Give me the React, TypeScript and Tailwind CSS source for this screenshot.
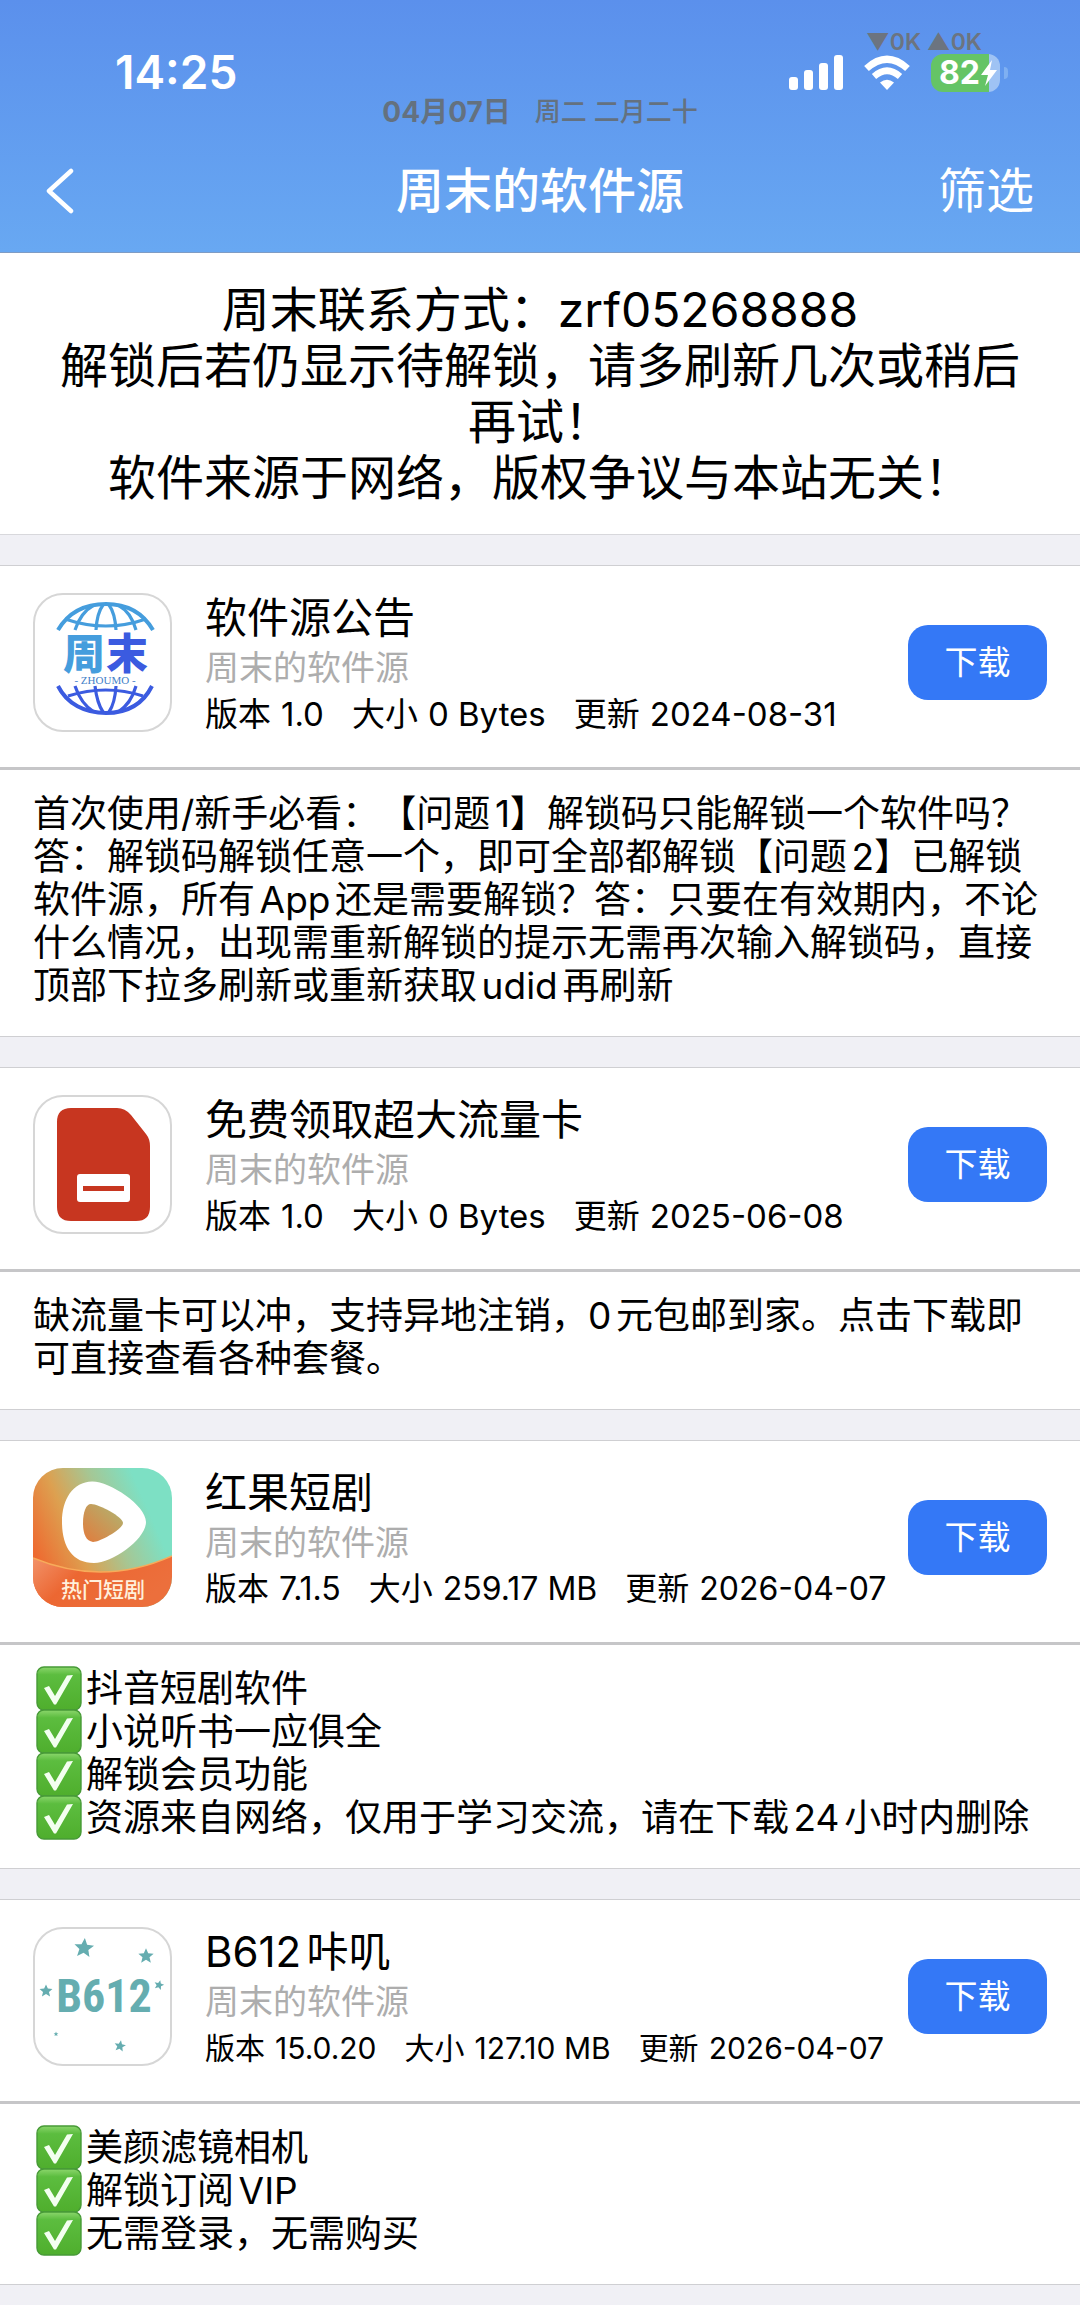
import type { ReactNode } from "react";

const FONT = "font-['Inter','Noto_Sans_CJK_SC',sans-serif]";

function NoticeIcon() {
  return (
    <svg viewBox="2 2 135 135" className="size-full" aria-hidden="true">
      <g fill="none" stroke="#459ddd" strokeWidth="3.2">
        <path d="M25 37C35 20 52 11 73 11S110 20 120 37" strokeWidth="4" />
        <path d="M32 26Q73 40 113 26" />
        <path d="M42 37Q48 19 61 12M63 37Q64 20 70 12M83 37Q82 20 76 12M103 37Q98 19 85 12" />
      </g>
      <g fill="none" stroke="#3b5be0" strokeWidth="3.2">
        <path d="M25 93C34 111 52 120 73 120S110 111 119 93" strokeWidth="4" />
        <path d="M35 103Q73 91 110 103" />
        <path d="M42 93Q48 111 61 119M62 93Q64 110 70 119M83 93Q82 110 76 119M103 93Q98 111 85 119" />
      </g>
      <g fontFamily="'Noto Sans CJK SC', sans-serif" fontWeight="900" fontSize="42">
        <text x="30" y="76" fill="#459ddd">周</text>
        <text x="73" y="76" fill="#3b5be0">末</text>
      </g>
      <text x="72" y="91" textAnchor="middle" fontFamily="'Liberation Serif', serif" fontSize="11" fill="#4380c8">
        - ZHOUMO -
      </text>
    </svg>
  );
}

function SimIcon() {
  return (
    <svg viewBox="2 2 135 135" className="size-full" aria-hidden="true">
      <path
        d="M38 13H84Q92 13 98 20L113 39Q117 44 117 51V112Q117 126 103 126H38Q24 126 24 112V27Q24 13 38 13Z"
        fill="#c73620"
      />
      <rect x="44" y="79" width="53" height="28" rx="3" fill="#fff" />
      <rect x="50" y="91" width="41" height="5" fill="#c73620" />
    </svg>
  );
}

function DramaIcon() {
  return (
    <svg viewBox="0 0 139 139" className="size-full" aria-hidden="true">
      <defs>
        <linearGradient id="dramaBase" x1="0.05" y1="0.7" x2="0.85" y2="0.35">
          <stop offset="0" stopColor="#ee6a30" />
          <stop offset="0.35" stopColor="#dda050" />
          <stop offset="0.68" stopColor="#a5c795" />
          <stop offset="1" stopColor="#7de0c4" />
        </linearGradient>
        <linearGradient id="dramaBand" x1="0" y1="0" x2="1" y2="0.4">
          <stop offset="0" stopColor="#f2936a" />
          <stop offset="0.4" stopColor="#ec6732" />
          <stop offset="1" stopColor="#ec6f3c" />
        </linearGradient>
        <linearGradient id="dramaPlay" x1="0" y1="1" x2="1" y2="0">
          <stop offset="0" stopColor="#e27b3c" />
          <stop offset="1" stopColor="#adb774" />
        </linearGradient>
      </defs>
      <rect width="139" height="139" fill="url(#dramaBase)" />
      <path
        d="M59 13.500C76 13 113 37 113 54C113 71 80 95 61 95C39 95 29 78 29 54C29 31 40 14 59 13.500Z"
        fill="#fff"
      />
      <path
        d="M58 36C66 36 90 49 90 55C90 61 67 74 60 74C53 73 50 66 50 55C50 44 53 36 58 36Z"
        fill="url(#dramaPlay)"
      />
      <path d="M0 90Q70 119 139 88V139H0Z" fill="url(#dramaBand)" />
      <path d="M0 90Q70 119 139 88" fill="none" stroke="#f7ab5a" strokeWidth="1.5" />
      <text
        x="70"
        y="129"
        textAnchor="middle"
        fontFamily="'Noto Sans CJK SC', sans-serif"
        fontWeight="500"
        fontSize="21"
        fill="#fff0dc"
      >
        热门短剧
      </text>
    </svg>
  );
}

const STAR = "M0 -10L2.8 -3.6L9.8 -3L4.5 1.5L6.2 8.5L0 4.7L-6.2 8.5L-4.5 1.5L-9.8 -3L-2.8 -3.6Z";

function CameraIcon() {
  return (
    <svg viewBox="2 2 135 135" className="size-full" fill="#65adb0" aria-hidden="true">
      <path d={STAR} transform="translate(51 21) rotate(5)" />
      <path d={STAR} transform="translate(113 29) scale(.78)" />
      <path d={STAR} transform="translate(13 64) scale(.66)" />
      <path d={STAR} transform="translate(126 58) rotate(15) scale(.5)" />
      <path d={STAR} transform="translate(87 119) rotate(10) scale(.58)" />
      <path d={STAR} transform="translate(23 107) scale(.24)" />
      <text
        x="71"
        y="85"
        textAnchor="middle"
        fontFamily="'Roboto Condensed', 'Open Sans Condensed', Roboto, sans-serif"
        fontWeight="700"
        fontSize="46"
      >
        B612
      </text>
    </svg>
  );
}

function Check() {
  return (
    <svg viewBox="0 0 46 45" className="-my-px mr-1 ml-[3px] h-[45px] w-[46px] shrink-0" role="img" aria-label="✅">
      <defs>
        <linearGradient id="checkFill" x1="0" y1="0" x2="0" y2="1">
          <stop offset="0" stopColor="#8bd66c" />
          <stop offset="0.18" stopColor="#5cbd3f" />
          <stop offset="1" stopColor="#4fae2d" />
        </linearGradient>
      </defs>
      <rect x="1" y="1" width="44" height="43" rx="7" fill="url(#checkFill)" stroke="#479a37" strokeWidth="1.4" />
      <path d="M8 22L13 20L19 30L31 9.5L37 9L20 38.5H18Z" fill="#f3fff0" />
    </svg>
  );
}

type App = {
  name: string;
  version: string;
  size: string;
  updated: string;
  metaClass: string;
  icon: ReactNode;
  bordered: boolean;
  checked?: boolean;
  lines: string[];
};

const apps: App[] = [
  {
    name: "软件源公告",
    version: "1.0",
    size: "0 Bytes",
    updated: "2024-08-31",
    metaClass: "text-[33px]",
    icon: <NoticeIcon />,
    bordered: true,
    lines: [
      "首次使用/新手必看：【问题1】解锁码只能解锁一个软件吗？",
      "答：解锁码解锁任意一个，即可全部都解锁【问题2】已解锁",
      "软件源，所有App还是需要解锁？答：只要在有效期内，不论",
      "什么情况，出现需重新解锁的提示无需再次输入解锁码，直接",
      "顶部下拉多刷新或重新获取udid再刷新",
    ],
  },
  {
    name: "免费领取超大流量卡",
    version: "1.0",
    size: "0 Bytes",
    updated: "2025-06-08",
    metaClass: "text-[33px]",
    icon: <SimIcon />,
    bordered: true,
    lines: ["缺流量卡可以冲，支持异地注销，0元包邮到家。点击下载即", "可直接查看各种套餐。"],
  },
  {
    name: "红果短剧",
    version: "7.1.5",
    size: "259.17 MB",
    updated: "2026-04-07",
    metaClass: "text-[32px]",
    icon: <DramaIcon />,
    bordered: false,
    checked: true,
    lines: ["抖音短剧软件", "小说听书一应俱全", "解锁会员功能", "资源来自网络，仅用于学习交流，请在下载24小时内删除"],
  },
  {
    name: "B612咔叽",
    version: "15.0.20",
    size: "127.10 MB",
    updated: "2026-04-07",
    metaClass: "text-[30px]",
    icon: <CameraIcon />,
    bordered: true,
    checked: true,
    lines: ["美颜滤镜相机", "解锁订阅VIP", "无需登录，无需购买"],
  },
];

function Header() {
  return (
    <header className="border-b border-[#7f9cc4] bg-linear-to-b from-[#5b90ec] to-[#68a8f2] text-white">
      <div className="grid h-[130px] grid-cols-3">
        <div className="pt-[43px] pl-[115px] text-[46px] leading-[58px] font-semibold">14:25</div>
        <div className="flex items-end justify-center gap-6 pb-1 leading-[28px] whitespace-nowrap text-[#64717f]">
          <span className="text-[28px] font-bold">04月07日</span>
          <span className="text-[26px] font-medium">周二 二月二十</span>
        </div>
        <div className="flex flex-col items-end pt-[30px] pr-[72px]">
          <div className="pr-[26px] text-[23px] leading-[24px] font-semibold text-[#6c7480]">▼0K ▲0K</div>
          <div className="flex items-center gap-5">
            <svg viewBox="0 0 54 36" className="h-9 w-[54px]" fill="#fff" aria-hidden="true">
              <rect x="0" y="22" width="9" height="13" rx="3" />
              <rect x="15" y="15" width="9" height="20" rx="3" />
              <rect x="30" y="8" width="9" height="27" rx="3" />
              <rect x="45" y="0" width="9" height="35" rx="3" />
            </svg>
            <svg viewBox="0 0 48 36" className="h-9 w-12" fill="none" stroke="#fff" strokeWidth="7" aria-hidden="true">
              <path d="M3.5 13.5Q24 -5 44.5 13.5" />
              <path d="M11 21.5Q24 10 37 21.5" strokeWidth="6.5" />
              <path d="M17 27.5Q24 22 31 27.5L24 35Z" fill="#fff" stroke="none" />
            </svg>
            <div className="flex items-center gap-1">
              <div className="flex h-[38px] w-[69px] items-center overflow-hidden rounded-xl bg-linear-to-r from-[#65c466] from-84% to-[#9fc3f4] to-84% pl-2 text-[32px] leading-none font-bold">
                82
                <svg viewBox="0 0 18 28" className="h-7 w-[18px]" fill="#fff" aria-hidden="true">
                  <path d="M12 1L1 16H8L5 27L17 11H10Z" />
                </svg>
              </div>
              <div className="h-3 w-1 rounded-r-full bg-[#7fb0f2]" />
            </div>
          </div>
        </div>
      </div>
      <nav className="grid h-[122px] grid-cols-3 items-center px-[46px]">
        <button type="button" aria-label="返回" className="justify-self-start">
          <svg viewBox="0 0 28 46" className="h-[46px] w-7" fill="none" stroke="#fff" strokeWidth="4.5" strokeLinecap="round" strokeLinejoin="round" aria-hidden="true">
            <path d="M25 3L3 23L25 43" />
          </svg>
        </button>
        <h1 className="justify-self-center text-[48px] leading-[56px] font-medium whitespace-nowrap">周末的软件源</h1>
        <button type="button" className="justify-self-end text-[48px] leading-[56px]">
          筛选
        </button>
      </nav>
    </header>
  );
}

function AppCard({ app }: { app: App }) {
  return (
    <article className="border-y border-[#cfcfd2] bg-white">
      <div className="flex items-start border-b-3 border-[#c6c6c8] px-[33px] pt-[27px] pb-8">
        <div className={`size-[139px] shrink-0 overflow-hidden rounded-[30px] ${app.bordered ? "border-2 border-[#d6d6d6]" : ""}`}>
          {app.icon}
        </div>
        <div className="ml-[33px] min-w-0 flex-1 whitespace-nowrap">
          <h2 className="text-[42px] leading-[50px] [text-autospace:normal]">{app.name}</h2>
          <p className="mt-1 text-[34px] leading-[42px] text-[#adadad]">周末的软件源</p>
          <dl className={`mt-1 flex gap-7 leading-[42px] ${app.metaClass}`}>
            <div className="flex gap-2.5"><dt>版本</dt><dd>{app.version}</dd></div>
            <div className="flex gap-2.5"><dt>大小</dt><dd>{app.size}</dd></div>
            <div className="flex gap-2.5"><dt>更新</dt><dd>{app.updated}</dd></div>
          </dl>
        </div>
        <button
          type="button"
          aria-label={`下载 ${app.name}`}
          className="mt-8 h-[75px] w-[139px] shrink-0 rounded-[20px] bg-[#3478f6] text-[33px] leading-none text-white"
        >
          下载
        </button>
      </div>
      <div className="px-[33px] pt-[22px] pb-[29px] text-[37px] leading-[43px] whitespace-nowrap [text-autospace:normal] [text-spacing-trim:space-all]">
        {app.lines.map((line) => (
          <p key={line} className="flex h-[43px] items-center">
            {app.checked && <Check />}
            <span>{line}</span>
          </p>
        ))}
      </div>
    </article>
  );
}

export default function App() {
  return (
    <div className={`min-h-screen overflow-x-hidden bg-[#f0f0f5] text-black ${FONT}`}>
      <Header />
      <main className="flex flex-col gap-[30px]">
        <section className="border-b border-[#d8d8dc] bg-white px-12 pt-[29px] pb-7 text-center text-[48px] leading-[56px]">
          <p>周末联系方式：zrf05268888</p>
          <p>解锁后若仍显示待解锁，请多刷新几次或稍后再试！</p>
          <p>软件来源于网络，版权争议与本站无关！</p>
        </section>
        {apps.map((app) => (
          <AppCard key={app.name} app={app} />
        ))}
      </main>
    </div>
  );
}
